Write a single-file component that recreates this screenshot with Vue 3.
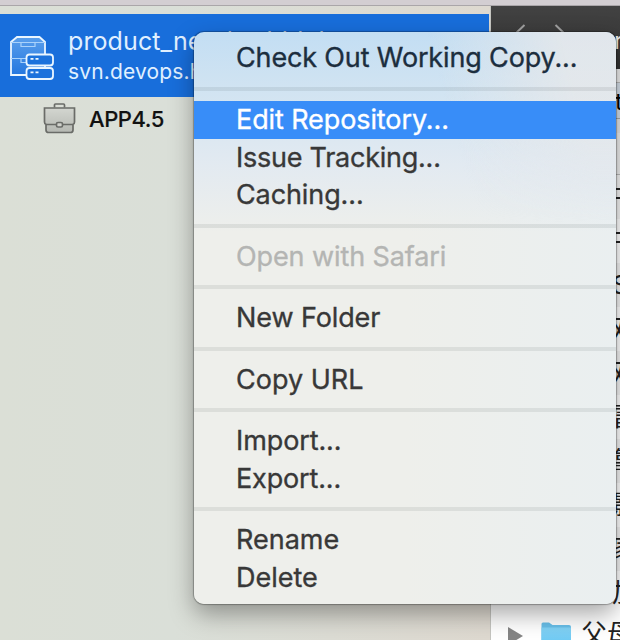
<script setup>
const groups = [
  [{ t: 'Check Out Working Copy...', c: 't16' }],
  [{ t: 'Edit Repository...', c: 't10', active: true }, { t: 'Issue Tracking...', c: 't26' }, { t: 'Caching...', c: 't10' }],
  [{ t: 'Open with Safari', c: 't10', disabled: true }],
  [{ t: 'New Folder', c: 't10' }],
  [{ t: 'Copy URL', c: '' }],
  [{ t: 'Import...', c: 't10' }, { t: 'Export...', c: 't16' }],
  [{ t: 'Rename', c: '' }, { t: 'Delete', c: '' }],
]
const rows = ['F', 'F', 'S', '观', '观', '雷', '靠', '影', '家', '加']
</script>

<template>
  <div class="window">
    <div class="titlebar"></div>
    <div class="body">
      <aside class="sidebar">
        <div class="repo">
          <svg class="repo-icon" width="46" height="48" viewBox="0 0 46 48" fill="none" stroke="#eaf6ff" stroke-width="1.800">
            <defs>
              <linearGradient id="cab" x1="0" y1="0" x2="0" y2="1">
                <stop offset="0" stop-color="#5a9fec" />
                <stop offset="1" stop-color="#2477df" />
              </linearGradient>
            </defs>
            <path d="M3 42V9L9 4H31.500L37 9V42Z" fill="url(#cab)" />
            <path d="M3 9.500H37M3 25.500H20" stroke-width="1.200" stroke="#a9d2fb" />
            <path d="M13 10V13.500H27V10M13 26V29.500H20" stroke-width="1.200" stroke="#a9d2fb" />
            <rect x="18.500" y="21.500" width="26.500" height="11" rx="3" fill="#1b72dc" />
            <rect x="18.500" y="35" width="26.500" height="11" rx="3" fill="#1b72dc" />
            <path d="M22.500 25.800H25.500M27.500 25.800H30.500M22.500 39.300H25.500M27.500 39.300H30.500" />
          </svg>
          <div class="repo-text">
            <div class="name">product_new/webblob</div>
            <div class="host">svn.devops.hj</div>
          </div>
        </div>
        <div class="project">
          <svg width="34" height="32" viewBox="0 0 34 32" fill="none" stroke="#6a6c68" stroke-width="1.700">
            <defs>
              <linearGradient id="bag" x1="0" y1="0" x2="0" y2="1">
                <stop offset="0" stop-color="#d3d6d0" />
                <stop offset="1" stop-color="#b5b8b2" />
              </linearGradient>
            </defs>
            <path d="M12.500 5.500V3Q12.500 2 13.500 2H21.500Q22.500 2 22.500 3V5.500" />
            <path d="M2.500 6H32.500V20Q32.500 22 31 22.500V28Q31 30.500 28.500 30.500H6.500Q4 30.500 4 28V22.500Q2.500 22 2.500 20Z" fill="url(#bag)" />
            <path d="M4 22.500H14.500M20.500 22.500H31" />
            <rect x="14.500" y="20.500" width="6" height="4.500" rx="1.500" fill="#d0d2cc" />
          </svg>
          <span>APP4.5</span>
        </div>
      </aside>
      <main class="content">
        <header class="toolbar">
          <svg width="60" height="40" viewBox="0 0 60 40" fill="none" stroke="#a0a0a0" stroke-width="2">
            <path d="M17.500 1L6 12L17.500 23M48.500 1L60 12L48.500 23" />
          </svg>
          <span class="title">r</span>
        </header>
        <div class="pathbar"></div>
        <div class="tab">t</div>
        <div class="colhead"></div>
        <div class="files">
          <div v-for="(r, i) in rows" :key="i" class="file" :class="{ latin: r === 'F' }">{{ r }}</div>
        </div>
        <div class="folder">
          <svg width="81" height="32" viewBox="0 0 81 32">
            <defs>
              <linearGradient id="fold" x1="0" y1="0" x2="0" y2="1">
                <stop offset="0" stop-color="#83d3f6" />
                <stop offset="1" stop-color="#5fc3f2" />
              </linearGradient>
            </defs>
            <path d="M17 6L32 15L17 24Z" fill="#858585" />
            <path d="M50.500 3Q50.500 1.500 52 1.500H58L61.500 4H78Q80 4 80 6V32H50.500Z" fill="#68bfe9" />
            <path d="M50.500 6.500H80V32H50.500Z" fill="url(#fold)" />
          </svg>
          <span>父母</span>
        </div>
      </main>
    </div>
    <div class="menu">
      <div v-for="(g, i) in groups" :key="i" class="group">
        <div v-for="m in g" :key="m.t" class="item" :class="[m.c, { active: m.active, disabled: m.disabled }]">{{ m.t }}</div>
      </div>
    </div>
  </div>
</template>

<style>
body { margin: 0; overflow: hidden; }
</style>
<style scoped>
.window { position: relative; width: 620px; height: 640px; overflow: hidden; display: flex; flex-direction: column; font-family: Inter, "Noto Sans CJK SC", sans-serif; background: #dbdfd7; }
.titlebar { height: 6px; box-sizing: border-box; background: #d3ced2; border-bottom: 1px solid #aaa6a9; flex: none; }
.body { flex: 1; display: flex; min-height: 0; }
.sidebar { width: 491px; flex: none; box-sizing: border-box; padding-top: 8px; border-right: 1px solid #c5c5c0; background: linear-gradient(90deg, #dbdfd6, #dadfd8 35%, #ded9d0 100%); }
.repo { height: 83px; box-sizing: border-box; width: 489px; padding-left: 8px; display: flex; background: #186edb; color: #e0f0ff; }
.repo-icon { margin-top: 19px; flex: none; }
.repo-text { margin-left: 14px; white-space: nowrap; }
.name { font-size: 25px; line-height: 30px; margin-top: 12px; letter-spacing: 0.1px; }
.host { font-size: 21px; line-height: 28px; margin-top: 2px; letter-spacing: 0.150px; }
.project { display: flex; align-items: center; height: 43px; padding-left: 42px; gap: 13px; font-size: 22px; font-weight: 500; letter-spacing: -0.450px; color: #111; -webkit-text-stroke: 0.150px #111; }
.project svg { margin-bottom: 1px; }
.content { flex: 1; min-width: 0; background: #fff; overflow: hidden; }
.toolbar { height: 63px; background: linear-gradient(#424242, #333); display: flex; padding-left: 16px; box-sizing: border-box; }
.toolbar svg { margin-top: 18px; flex: none; overflow: visible; }
.title { color: #eee; font-size: 24px; margin: 20px 0 0 47px; }
.pathbar { height: 13px; background: #eee; border-bottom: 1px solid #bbb; }
.tab { height: 35px; padding-left: 124px; font-size: 24px; line-height: 37px; background: #d5dfe9; border-bottom: 1px solid #aaa; }
.colhead { height: 56px; box-sizing: border-box; background: #eee; border-top: 14px solid #e6e6e6; border-bottom: 1px solid #bbb; }
.files { display: flex; flex-direction: column; }
.file { height: 44px; padding-left: 121px; line-height: 44px; font-size: 26px; color: #222; white-space: nowrap; }
.latin { padding-left: 119px; font-size: 25px; line-height: 47px; }
.file:nth-child(odd) { background: #f4f4f4; }
.folder { display: flex; padding-top: 6px; background: #fff; }
.folder svg { flex: none; }
.folder span { margin-left: 9px; font-size: 26px; line-height: 26px; color: #222; white-space: nowrap; }
.menu { position: absolute; left: 194px; top: 32px; width: 422px; height: 572px; box-sizing: border-box; padding: 7.500px 0 8px; border-radius: 10px; overflow: hidden; background: linear-gradient(180deg, rgba(190,220,244,.9) 0, rgba(205,226,243,.8) 12%, rgba(220,231,244,.65) 23%, rgba(238,238,237,0) 35%), linear-gradient(90deg, #eeefeb 50%, #eaeff0); box-shadow: 0 0 1px 1px rgba(0,0,0,.28), 0 10px 24px rgba(0,0,0,.35); color: #383838; }
.menu::before { content: ""; position: absolute; inset: 0; background: linear-gradient(75deg, rgba(236,238,238,0) 60%, rgba(230,232,234,.85) 88%); height: 190px; -webkit-mask: linear-gradient(#000 50%, transparent); mask: linear-gradient(#000 50%, transparent); }
.group { position: relative; }
.group + .group::before { content: ""; display: block; height: 4px; margin: 10px 0; background: rgba(0,20,20,.075); }
.item { height: 37.500px; line-height: 37.500px; padding-left: 42px; font-size: 27px; white-space: nowrap; -webkit-text-stroke: 0.350px currentColor; }
.group:first-child .item { color: #1c2e3e; line-height: 36.500px; }
.t10 { letter-spacing: -0.100px; }
.t16 { letter-spacing: -0.150px; }
.t26 { letter-spacing: -0.250px; }
.active { background: #388df8; color: #fff; }
.disabled { color: #b4b5b3; }
</style>
